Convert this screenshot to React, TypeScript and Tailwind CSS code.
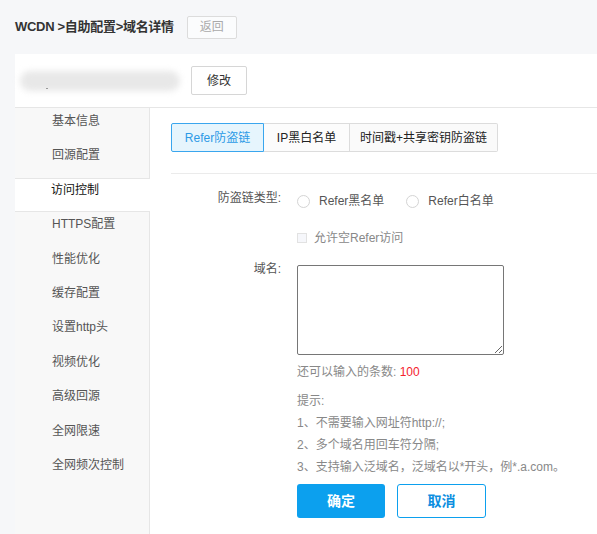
const menu = [
  "基本信息",
  "回源配置",
  "访问控制",
  "HTTPS配置",
  "性能优化",
  "缓存配置",
  "设置http头",
  "视频优化",
  "高级回源",
  "全网限速",
  "全网频次控制",
];

function Radio(props: { label: string }) {
  return (
    <label className="flex items-center gap-[9px]">
      <span className="w-[13px] h-[13px] rounded-full border border-[#d4d4d4] bg-white" />
      <span className="text-[12px] text-[#555]">{props.label}</span>
    </label>
  );
}

export default function App() {
  return (
    <div
      className="w-[597px] h-[534px] bg-[#f6f7f9] overflow-hidden flex flex-col"
      style={{ fontFamily: '"Liberation Sans", "Noto Sans CJK SC", sans-serif' }}
    >
      {/* header */}
      <div className="h-[54px] flex items-center pl-[15px] gap-[13px] shrink-0">
        <div className="text-[13px] font-bold text-[#333] -mt-[1px] tracking-[-0.3px]">WCDN &gt;自助配置&gt;域名详情</div>
        <button className="w-[50px] h-[23px] border border-[#dcdcdc] bg-white/60 text-[12px] text-[#aaa] rounded-[2px]">
          返回
        </button>
      </div>

      <div className="ml-[15px] flex-1 bg-white flex flex-col">
        {/* domain row */}
        <div className="h-[54px] flex items-center border-b border-[#e6e6e6] shrink-0">
          <div className="relative w-[160px] h-[20px] ml-[5px]">
            <div className="absolute inset-0 rounded-full bg-[#e8e8e8] blur-[3px]" />
            <div className="absolute left-[26px] top-[17px] w-[2px] h-[1px] bg-[#999]" />
          </div>
          <button className="ml-[11px] w-[56px] h-[29px] border border-[#d6d6d6] rounded-[2px] bg-white text-[12px] text-[#333]">
            修改
          </button>
        </div>

        <div className="flex flex-1">
          {/* sidebar */}
          <div className="w-[135px] bg-[#f8f8f8] border-r border-[#e6e6e6] shrink-0 pt-[1px]">
            {menu.map((m) =>
              m === "访问控制" ? (
                <div
                  key={m}
                  className="h-[34.4px] bg-white border-y border-[#e6e6e6] pl-[36px] text-[12px] leading-[23px] text-[#111] -mr-[1px]"
                >
                  {m}
                </div>
              ) : (
                <div key={m} className="h-[34.4px] pl-[37px] text-[12px] leading-[25px] text-[#555]">
                  {m}
                </div>
              )
            )}
          </div>

          {/* main */}
          <div className="flex-1 pl-[21px] pt-[15px]">
            <div className="flex h-[29px] text-[12px]">
              <div className="w-[93px] flex items-center justify-center bg-[#e6f5fd] border border-[#3aa6ee] text-[#2c9ae6] rounded-l-[2px]">
                Refer防盗链
              </div>
              <div className="w-[86px] flex items-center justify-center bg-[#fcfcfc] border-y border-r border-[#dcdcdc] text-[#222]">
                IP黑白名单
              </div>
              <div className="w-[148px] flex items-center justify-center bg-[#fafafa] border-y border-r border-[#dcdcdc] text-[#222] rounded-r-[2px]">
                时间戳+共享密钥防盗链
              </div>
            </div>
            <div className="mt-[21px] h-[1px] bg-[#ebebeb]" />

            <div className="mt-[13px] flex items-start">
              <div className="w-[112px] text-right pr-[2px] text-[12px] text-[#555] leading-[22px]">防盗链类型:</div>
              <div className="ml-[14px] flex gap-[22px] items-center h-[22px] mt-[3px]">
                <Radio label="Refer黑名单" />
                <Radio label="Refer白名单" />
              </div>
            </div>

            <div className="mt-[17px] ml-[126px] flex items-center gap-[7px]">
              <span className="w-[10px] h-[10px] border border-[#e2e2e2] bg-[#f6f7fb]" />
              <span className="text-[12px] text-[#888]">允许空Refer访问</span>
            </div>

            <div className="mt-[18px] flex items-start">
              <div className="w-[112px] text-right pr-[2px] text-[12px] text-[#555] leading-[12px] -mt-[2px]">域名:</div>
              <textarea className="ml-[14px] w-[207px] h-[90px] border border-[#767676] rounded-[2px] outline-none resize" />
            </div>

            <div className="ml-[126px] mt-[7px] text-[12px] text-[#888] leading-[20px]">
              还可以输入的条数: <span className="text-[#f5222d]">100</span>
            </div>

            <div className="ml-[126px] mt-[8px] text-[12px] text-[#888] leading-[22px] flex flex-col">
              <span>提示:</span>
              <span>1、不需要输入网址符http://;</span>
              <span>2、多个域名用回车符分隔;</span>
              <span>3、支持输入泛域名，泛域名以*开头，例*.a.com。</span>
            </div>

            <div className="ml-[126px] mt-[6px] flex gap-[12px]">
              <button className="w-[88px] h-[34px] rounded-[3px] bg-[#0ca0ee] text-white text-[14px] font-bold">确定</button>
              <button className="w-[89px] h-[34px] rounded-[3px] border border-[#0ca0ee] bg-white text-[#0c8ee0] text-[14px] font-bold">
                取消
              </button>
            </div>
          </div>
        </div>
      </div>
    </div>
  );
}
